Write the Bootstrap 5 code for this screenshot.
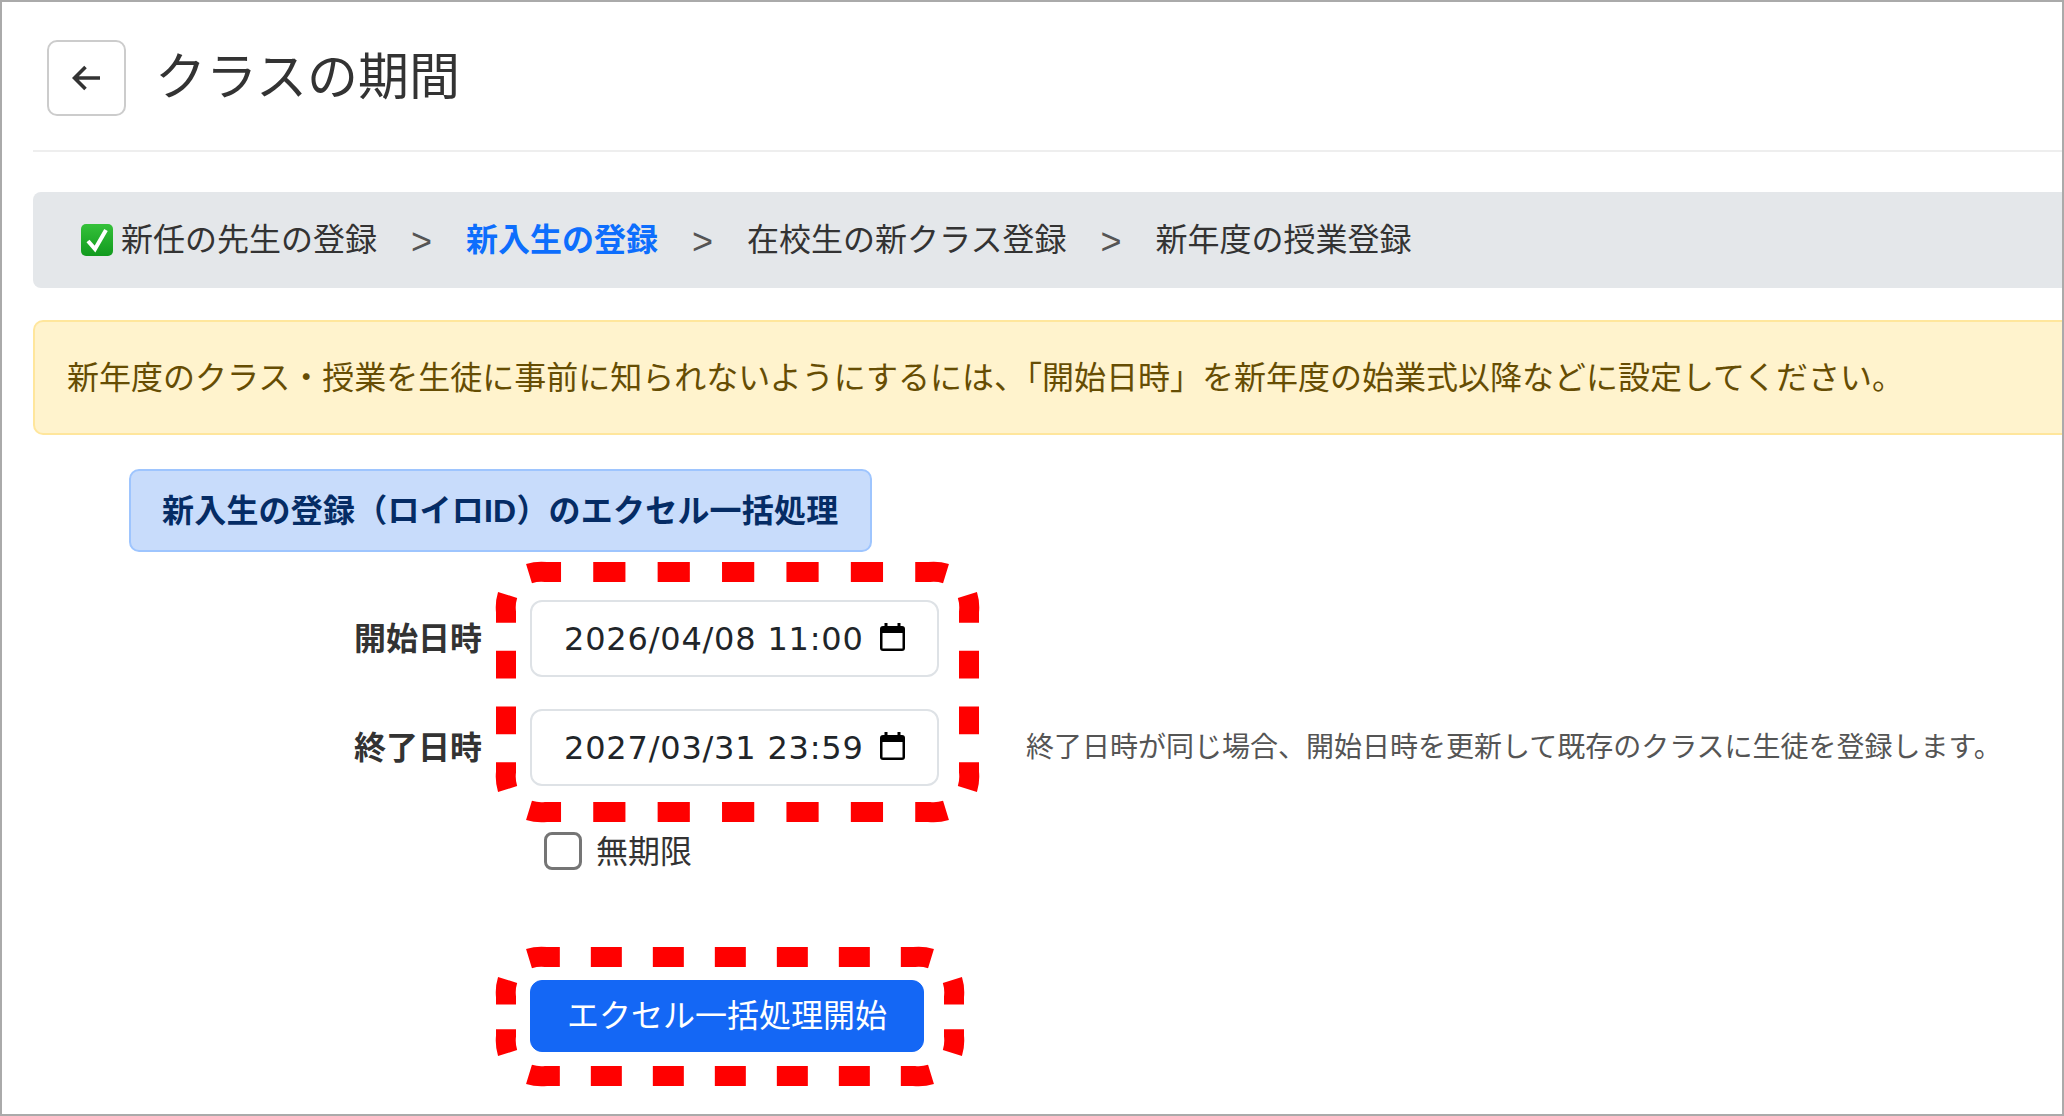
<!DOCTYPE html>
<html lang="ja">

<head>
    <meta charset="UTF-8">
    <meta name="viewport" content="width=device-width, initial-scale=1.0">
    <title>クラスの期間</title>

    <link href="https://cdn.jsdelivr.net/npm/bootstrap@5.3.0/dist/css/bootstrap.min.css" rel="stylesheet">

    <style>
        body {
            margin: 0;
            background-color: #fff;
            font-family: "Liberation Sans", "Noto Sans CJK JP", sans-serif;
            font-size: 32px;
            color: #333;
        }

        .page-frame {
            height: 100vh;
            padding-left: 31px;
            border: 2px solid #aaa;
            overflow: hidden;
        }

        .title-row {
            padding: 38px 0 34px 14px;
            border-bottom: 2px solid #eee;
            gap: 29px;
        }

        .back-btn {
            width: 79px;
            height: 76px;
            padding: 0;
            border: 2px solid #ccc;
            border-radius: 10px;
        }

        .page-title {
            margin: 0;
            font-size: 51px;
            font-weight: 400;
            line-height: 76px;
            color: #333;
        }

        .step-bar {
            height: 96px;
            margin-top: 40px;
            padding-left: 48px;
            background-color: #e4e7ea;
            border-radius: 8px 0 0 8px;
        }

        .step-check {
            width: 32px;
            height: 32px;
            margin-right: 8px;
        }

        .step-active {
            color: #0d6efd;
            font-weight: 700;
        }

        .step-sep {
            margin: 0 34px;
            padding-top: 3px;
            font-size: 36px;
            line-height: 1;
            color: #555;
        }

        .note-alert {
            height: 115px;
            margin: 32px 0 0;
            padding: 0 0 0 32px;
            background-color: #fff3cd;
            border: 2px solid #ffe69c;
            border-right: 0;
            border-radius: 10px 0 0 10px;
            color: #664d03;
            white-space: nowrap;
        }

        .excel-title {
            width: 743px;
            height: 83px;
            margin: 34px 0 0 96px;
            padding-left: 31px;
            background-color: #c8dcfb;
            border: 2px solid #9ec5fe;
            border-radius: 10px;
            color: #052c65;
            font-weight: 700;
            letter-spacing: .2px;
            white-space: nowrap;
        }

        .date-area {
            margin-top: 48px;
        }

        .date-row {
            height: 77px;
        }

        .date-row + .date-row {
            margin-top: 32px;
        }

        .date-label {
            width: 449px;
            margin: 0 48px 0 0;
            padding: 0;
            font-size: 32px;
            font-weight: 700;
            text-align: right;
        }

        .date-field {
            width: 409px;
            height: 77px;
        }

        .date-input {
            height: 77px;
            padding: 0 60px 0 32px;
            border: 2px solid #dee2e6;
            border-radius: 12px;
            font-family: "DejaVu Sans", sans-serif;
            font-size: 32px;
            letter-spacing: .8px;
            color: #212529;
        }

        .cal-icon {
            position: absolute;
            left: 350px;
            top: 23px;
            width: 25px;
            height: 28px;
        }

        .date-hint {
            margin-left: 87px;
            font-size: 28px;
            color: #555;
            white-space: nowrap;
        }

        .red-dash {
            position: absolute;
            overflow: visible;
            fill: none;
            stroke: #f00;
            stroke-width: 20;
        }

        .dash-dates {
            left: 0;
            top: 0;
            width: 483px;
            height: 260px;
            margin: -38px 0 0 463px;
        }

        .forever-row {
            height: 38px;
            margin: 46px 0 0 511px;
        }

        .forever-check {
            width: 38px;
            height: 38px;
            margin: 0;
            border: 3px solid #757575;
            border-radius: 7px;
        }

        .forever-label {
            margin-left: 14px;
            padding-top: 2px;
            color: #333;
        }

        .start-area {
            width: 394px;
            margin: 110px 0 0 497px;
        }

        .start-btn {
            width: 394px;
            height: 72px;
            padding: 0;
            border-radius: 12px;
            font-size: 32px;
            background-color: #1467f5;
            border-color: #1467f5;
        }

        .dash-start {
            left: -34px;
            top: -33px;
            width: 468px;
            height: 139px;
        }
    </style>
</head>

<body>
    <div class="page-frame">
        <header class="title-row d-flex align-items-center">
            <a class="back-btn btn d-flex align-items-center justify-content-center" href="#" aria-label="戻る">
                <svg width="30" height="26" viewBox="0 0 30 26" fill="none" stroke="#333" stroke-width="3.6">
                    <path d="M28 13H3M13.5 2 2.5 13l11 11" />
                </svg>
            </a>
            <h1 class="page-title">クラスの期間</h1>
        </header>

        <nav class="step-bar d-flex align-items-center">
            <svg class="step-check" viewBox="0 0 32 32">
                <defs>
                    <linearGradient id="checkGreen" x1="0" y1="0" x2="0" y2="1">
                        <stop offset="0" stop-color="#35c13a" />
                        <stop offset="1" stop-color="#119a1e" />
                    </linearGradient>
                </defs>
                <rect width="32" height="32" rx="5" fill="url(#checkGreen)" />
                <path d="M7 17 14 25 25 6" fill="none" stroke="#fff" stroke-width="4" />
            </svg>
            <span>新任の先生の登録</span>
            <span class="step-sep">&gt;</span>
            <span class="step-active">新入生の登録</span>
            <span class="step-sep">&gt;</span>
            <span>在校生の新クラス登録</span>
            <span class="step-sep">&gt;</span>
            <span>新年度の授業登録</span>
        </nav>

        <div class="note-alert alert d-flex align-items-center" role="alert">
            新年度のクラス・授業を生徒に事前に知られないようにするには、「開始日時」を新年度の始業式以降などに設定してください。
        </div>

        <div class="excel-title d-flex align-items-center">新入生の登録（ロイロID）のエクセル一括処理</div>

        <form>
            <div class="date-area position-relative">
                <!-- 赤い点線の枠 -->
                <svg class="red-dash dash-dates" viewBox="0 0 483 260">
                    <path stroke-dasharray="32.2 32.2" d="M33 11.6A42 42 0 0 1 50 10H433A42 42 0 0 1 450 11.6" />
                    <path stroke-dasharray="32.2 32.2" d="M33 248.4A42 42 0 0 0 50 250H433A42 42 0 0 0 450 248.4" />
                    <path stroke-dasharray="27.9 27.9" d="M11.6 33A42 42 0 0 0 10 50V210A42 42 0 0 0 11.6 227" />
                    <path stroke-dasharray="27.9 27.9" d="M471.4 33A42 42 0 0 1 473 50V210A42 42 0 0 1 471.4 227" />
                </svg>

                <div class="date-row d-flex align-items-center">
                    <label class="date-label" for="fechaInicio">開始日時</label>
                    <div class="date-field position-relative">
                        <input class="date-input form-control" id="fechaInicio" type="text" value="2026/04/08 11:00">
                        <svg class="cal-icon" viewBox="0 0 25 28">
                            <rect y="3" width="25" height="25" rx="3" fill="#000" />
                            <path d="M2.5 10h20v15.5h-20z" fill="#fff" />
                            <path d="M4.5 0h3v5h-3zM17.5 0h3v5h-3z" fill="#000" />
                        </svg>
                    </div>
                </div>
                <div class="date-row d-flex align-items-center">
                    <label class="date-label" for="fechaFin">終了日時</label>
                    <div class="date-field position-relative">
                        <input class="date-input form-control" id="fechaFin" type="text" value="2027/03/31 23:59">
                        <svg class="cal-icon" viewBox="0 0 25 28">
                            <rect y="3" width="25" height="25" rx="3" fill="#000" />
                            <path d="M2.5 10h20v15.5h-20z" fill="#fff" />
                            <path d="M4.5 0h3v5h-3zM17.5 0h3v5h-3z" fill="#000" />
                        </svg>
                    </div>
                    <span class="date-hint">終了日時が同じ場合、開始日時を更新して既存のクラスに生徒を登録します。</span>
                </div>
            </div>

            <div class="forever-row d-flex align-items-center">
                <input class="forever-check form-check-input" id="sinLimite" type="checkbox">
                <label class="forever-label" for="sinLimite">無期限</label>
            </div>

            <div class="start-area position-relative">
                <svg class="red-dash dash-start" viewBox="0 0 468 139">
                    <path stroke-dasharray="31 31" d="M33 11.6A42 42 0 0 1 50 10H418A42 42 0 0 1 435 11.6" />
                    <path stroke-dasharray="31 31" d="M33 127.4A42 42 0 0 0 50 129H418A42 42 0 0 0 435 127.4" />
                    <path stroke-dasharray="24.7 24.7" d="M11.6 33A42 42 0 0 0 10 50V89A42 42 0 0 0 11.6 106" />
                    <path stroke-dasharray="24.7 24.7" d="M456.4 33A42 42 0 0 1 458 50V89A42 42 0 0 1 456.4 106" />
                </svg>
                <button class="start-btn btn btn-primary position-relative" type="button">エクセル一括処理開始</button>
            </div>
        </form>
    </div>

    <script src="https://cdn.jsdelivr.net/npm/bootstrap@5.3.0/dist/js/bootstrap.bundle.min.js"></script>
</body>

</html>
